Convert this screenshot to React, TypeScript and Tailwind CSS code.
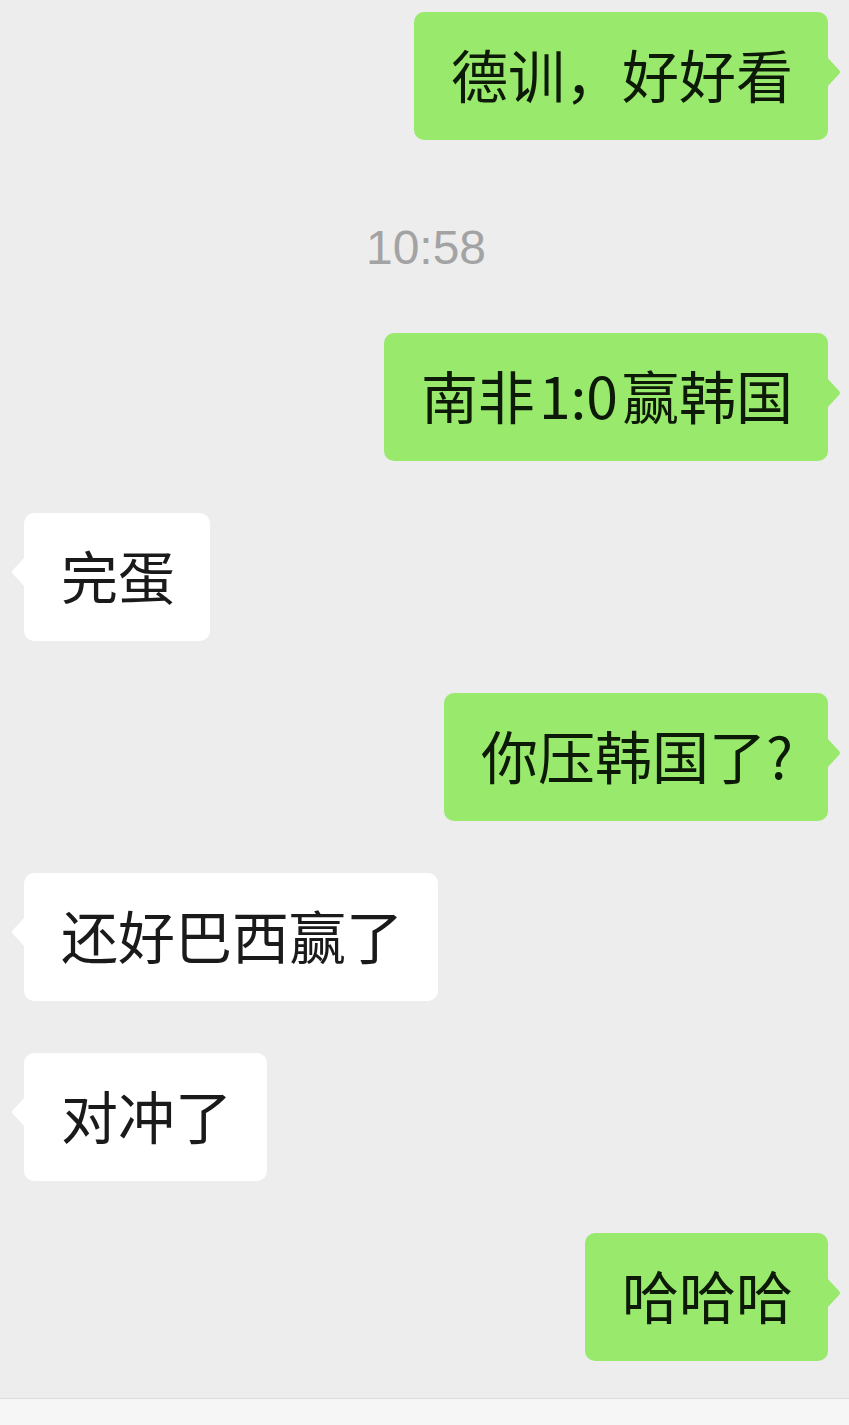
import React from "react";

type Msg = { side: "me" | "them"; text: React.ReactNode } | { side: "time"; text: string };

const messages: Msg[] = [
  { side: "me", text: "德训，好好看" },
  { side: "time", text: "10:58" },
  {
    side: "me",
    text: (
      <>
        南非<span className="mx-[4px]">1:0</span>赢韩国
      </>
    ),
  },
  { side: "them", text: "完蛋" },
  { side: "me", text: "你压韩国了?" },
  { side: "them", text: "还好巴西赢了" },
  { side: "them", text: "对冲了" },
  { side: "me", text: "哈哈哈" },
];

function Tail({ side }: { side: "me" | "them" }) {
  const fill = side === "me" ? "#98e96c" : "#ffffff";
  if (side === "me") {
    return (
      <svg
        width="14"
        height="30"
        viewBox="0 0 14 30"
        className="absolute top-[45px] right-[-13px]"
      >
        <path d="M0 0 L12 13 Q14 15 12 17 L0 30 Z" fill={fill} />
      </svg>
    );
  }
  return (
    <svg
      width="14"
      height="30"
      viewBox="0 0 14 30"
      className="absolute top-[44px] left-[-13px]"
    >
      <path d="M14 0 L2 13 Q0 15 2 17 L14 30 Z" fill={fill} />
    </svg>
  );
}

function Bubble({ side, text }: { side: "me" | "them"; text: React.ReactNode }) {
  const me = side === "me";
  return (
    <div className={me ? "flex justify-end" : "flex justify-start"}>
      <div
        className={
          me
            ? "relative flex h-[128px] items-center rounded-[10px] bg-[#98e96c] pl-[37px] pr-[35px] pb-[6px]"
            : "relative flex h-[128px] items-center rounded-[10px] bg-white pl-[37px] pr-[35px] pb-[6px]"
        }
      >
        <Tail side={side} />
        <span
          className={
            me
              ? "whitespace-pre text-[57px] leading-none text-[#0d1a08]"
              : "whitespace-pre text-[57px] leading-none text-[#1a1a1a]"
          }
          style={{ fontFamily: '"Noto Sans CJK SC", "Noto Sans", sans-serif' }}
        >
          {text}
        </span>
      </div>
    </div>
  );
}

export default function App() {
  return (
    <div className="flex h-[1425px] w-[849px] flex-col overflow-hidden bg-[#ededed]">
      <div className="flex flex-1 flex-col gap-[52px] pt-[12px] pl-[24px] pr-[21px]">
        {messages.map((m, i) =>
          m.side === "time" ? (
            <div
              key={i}
              className="-mt-[52px] -mb-[52px] flex justify-center pt-[84px] pb-[61px]"
            >
              <span
                className="text-[48px] leading-none text-[#a3a3a3]"
                style={{ fontFamily: '"Liberation Sans", Arial, sans-serif' }}
              >
                {m.text}
              </span>
            </div>
          ) : (
            <Bubble key={i} side={m.side} text={m.text} />
          )
        )}
      </div>
      <div className="h-[27px] border-t border-[#dcdcdc] bg-[#f6f6f6]" />
    </div>
  );
}
